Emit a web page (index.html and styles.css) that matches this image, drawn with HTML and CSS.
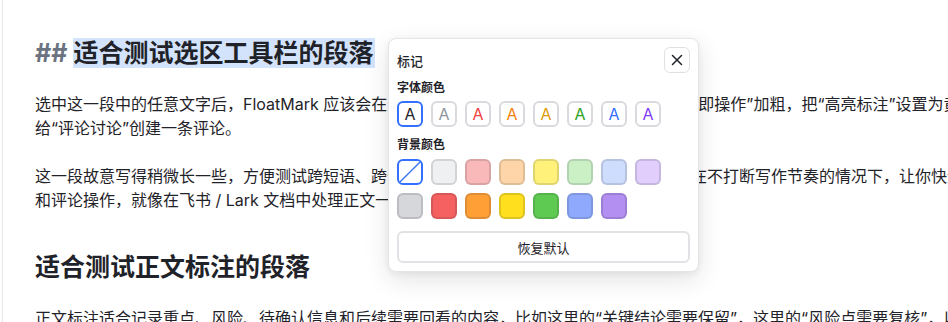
FILE: index.html
```html
<!DOCTYPE html>
<html lang="zh-CN">
<head>
<meta charset="utf-8">
<title>FloatMark</title>
<link rel="stylesheet" href="styles.css">
</head>
<body>
<div class="page">
  <article class="doc">
    <h2 class="doc-h2"><span class="md-mark">##</span> <span class="sel">适合测试选区工具栏的段落</span></h2>
    <p class="doc-p"><span class="ln">选中这一段中的任意文字后，FloatMark 应该会在这段选中文字上方弹出工具栏。可以把“选中即操作”加粗，把“高亮标注”设置为黄色背景，再</span><span class="ln">给“评论讨论”创建一条评论。</span></p>
    <p class="doc-p"><span class="ln">这一段故意写得稍微长一些，方便测试跨短语、跨句子和跨标点的选择效果，并确认工具栏能在不打断写作节奏的情况下，让你快速完成加粗、高亮</span><span class="ln">和评论操作，就像在飞书 / Lark 文档中处理正文一样自然。</span></p>
    <h2 class="doc-h2 second">适合测试正文标注的段落</h2>
    <p class="doc-p"><span class="ln">正文标注适合记录重点、风险、待确认信息和后续需要回看的内容，比如这里的“关键结论需要保留”，这里的“风险点需要复核”，以及需要跟进的事项。</span></p>
  </article>

  <div class="mark-panel">
    <div class="panel-head">
      <span class="panel-title">标记</span>
      <button class="close-btn" aria-label="关闭">
        <svg width="14" height="14" viewBox="0 0 14 14"><path d="M2.5 2.5 L11.5 11.5 M11.5 2.5 L2.5 11.5" stroke="#1f2329" stroke-width="1.5" stroke-linecap="round" fill="none"/></svg>
      </button>
    </div>
    <div class="group-label">字体颜色</div>
    <div class="swatch-row">
      <span class="sw fc active c-black">A</span>
      <span class="sw fc c-gray">A</span>
      <span class="sw fc c-red">A</span>
      <span class="sw fc c-orange">A</span>
      <span class="sw fc c-amber">A</span>
      <span class="sw fc c-green">A</span>
      <span class="sw fc c-blue">A</span>
      <span class="sw fc c-purple">A</span>
    </div>
    <div class="group-label bg-label">背景颜色</div>
    <div class="swatch-row">
      <span class="sw none active"><svg width="22" height="22" viewBox="0 0 22 22"><path d="M0 22 L22 0" stroke="#3370ff" stroke-width="1.3"/></svg></span>
      <span class="sw bg b-gray1"></span>
      <span class="sw bg b-red1"></span>
      <span class="sw bg b-orange1"></span>
      <span class="sw bg b-yellow1"></span>
      <span class="sw bg b-green1"></span>
      <span class="sw bg b-blue1"></span>
      <span class="sw bg b-purple1"></span>
    </div>
    <div class="swatch-row row2">
      <span class="sw bg b-gray2"></span>
      <span class="sw bg b-red2"></span>
      <span class="sw bg b-orange2"></span>
      <span class="sw bg b-yellow2"></span>
      <span class="sw bg b-green2"></span>
      <span class="sw bg b-blue2"></span>
      <span class="sw bg b-purple2"></span>
    </div>
    <button class="reset-btn">恢复默认</button>
  </div>
</div>
</body>
</html>
```

FILE: styles.css
```css
html, body {
  margin: 0;
  padding: 0;
  background: #ffffff;
  overflow: hidden;
}
body {
  font-family: "Inter", "Noto Sans CJK SC", sans-serif;
  color: #1f2329;
  width: 948px;
  height: 322px;
}
.page {
  position: relative;
  margin-left: 2px;
  border-left: 1px solid #e4e6ea;
  height: 322px;
}
.doc {
  padding: 38px 0 0 32px;
  white-space: nowrap;
}
.doc-h2 {
  margin: 0;
  font-size: 25px;
  line-height: 30px;
  font-weight: 700;
  color: #1f2329;
}
.doc-h2.second {
  margin-top: 40px;
}
.md-mark {
  color: #6b7280;
}
.sel {
  display: inline-block;
  background: #d3e3fc;
  line-height: 30px;
  height: 30px;
  padding-right: 2px;
}
.doc-p {
  margin: 24px 0 0;
  font-size: 16px;
  line-height: 24px;
}
.doc-p .ln { display: block; }

.mark-panel {
  position: absolute;
  left: 385px;
  top: 38px;
  width: 293px;
  padding: 8px;
  background: #ffffff;
  border: 1px solid #e3e5e8;
  border-radius: 8px;
  box-shadow: 0 8px 24px rgba(31, 35, 41, 0.12), 0 2px 6px rgba(31, 35, 41, 0.06);
  display: flex;
  flex-direction: column;
}
.panel-head {
  display: flex;
  align-items: center;
  justify-content: space-between;
  height: 26px;
}
.panel-title {
  font-size: 13px;
  font-weight: 500;
  color: #1f2329;
}
.close-btn {
  width: 26px;
  height: 26px;
  padding: 0;
  border: 1px solid #dee0e3;
  border-radius: 6px;
  background: #ffffff;
  display: flex;
  align-items: center;
  justify-content: center;
}
.group-label {
  font-size: 12px;
  line-height: 16px;
  font-weight: 600;
  color: #1f2329;
  margin-top: 7px;
  margin-bottom: 5px;
}
.group-label.bg-label {
  margin-top: 10px;
  margin-bottom: 6px;
}
.swatch-row {
  display: flex;
  gap: 8px;
}
.swatch-row.row2 {
  margin-top: 8px;
}
.sw {
  box-sizing: border-box;
  width: 26px;
  height: 26px;
  border-radius: 6px;
  border: 2px solid #d8dadd;
  display: flex;
  align-items: center;
  justify-content: center;
  overflow: hidden;
}
.sw.active {
  border-color: #3370ff;
}
.fc {
  font-size: 16px;
  font-weight: 400;
  line-height: 1;
  background: #ffffff;
}
.sw.none {
  background: #ffffff;
}
.sw.bg {
  border-color: rgba(31, 35, 41, 0.14);
}
.c-black { color: #1f2329; }
.c-gray { color: #8f959e; }
.c-red { color: #f0403c; }
.c-orange { color: #f7820a; }
.c-amber { color: #dc9b04; }
.c-green { color: #2ea121; }
.c-blue { color: #3370ff; }
.c-purple { color: #7f3bf5; }

.b-gray1 { background: #eff0f1; }
.b-red1 { background: #f9b9b9; }
.b-orange1 { background: #fed5a8; }
.b-yellow1 { background: #fff17a; }
.b-green1 { background: #cbf0c5; }
.b-blue1 { background: #cedcfe; }
.b-purple1 { background: #e1cefd; }
.b-gray2 { background: #d6d7db; }
.b-red2 { background: #f56161; }
.b-orange2 { background: #ff9f36; }
.b-yellow2 { background: #ffdf1e; }
.b-green2 { background: #5fca52; }
.b-blue2 { background: #8faafd; }
.b-purple2 { background: #b28ff0; }

.reset-btn {
  margin-top: 12px;
  height: 32px;
  width: 100%;
  border: 2px solid #e0e2e5;
  border-radius: 6px;
  background: #ffffff;
  font-family: "Inter", "Noto Sans CJK SC", sans-serif;
  font-size: 13px;
  color: #1f2329;
}
```
